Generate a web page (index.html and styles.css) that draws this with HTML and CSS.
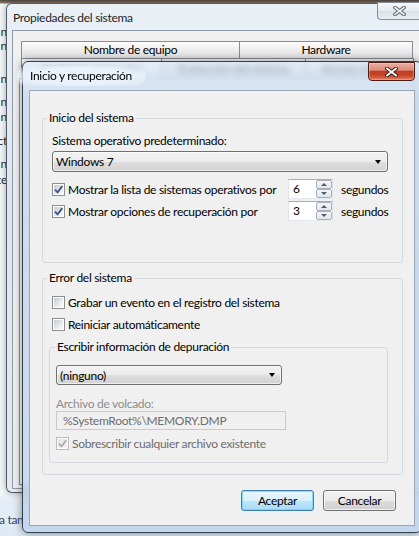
FILE: index.html
```html
<!DOCTYPE html>
<html lang="es">
<head>
<meta charset="utf-8">
<title>Inicio y recuperación</title>
<link rel="stylesheet" href="styles.css">
</head>
<body>
<div class="desktop">
  <div class="bgwin">
    <span class="frag f1">n</span>
    <span class="frag f2">n</span>
    <span class="frag f3">n</span>
    <span class="frag f4">n</span>
    <span class="frag f5">n</span>
    <span class="frag f6">ct</span>
    <span class="frag f7">n</span>
    <span class="frag f8">ce</span>
  </div>
  <div class="bgtext">a tan</div>

  <div class="win outer">
    <div class="titlebar">
      <span class="title">Propiedades del sistema</span>
      <span class="close inactive">
        <svg width="13" height="10" viewBox="0 0 13 10"><path d="M2 1.5 L11 8.5 M11 1.5 L2 8.5" stroke="#5d6873" stroke-width="3.6" stroke-linecap="square"/><path d="M2 1.5 L11 8.5 M11 1.5 L2 8.5" stroke="#f3f5f7" stroke-width="1.6" stroke-linecap="square"/></svg>
      </span>
    </div>
    <div class="client">
      <div class="tabs row1">
        <div class="tab t1">Nombre de equipo</div>
        <div class="tab t2">Hardware</div>
      </div>
      <div class="tabs row2">
        <div class="tab t3 sel">Opciones avanzadas</div>
        <div class="tab t4">Protección del sistema</div>
        <div class="tab t5">Acceso remoto</div>
      </div>
      <div class="tabpage"></div>
    </div>
  </div>

  <div class="win dialog">
    <div class="titlebar">
      <span class="title">Inicio y recuperación</span>
      <span class="close red">
        <svg width="13" height="10" viewBox="0 0 13 10"><path d="M2 1.5 L11 8.5 M11 1.5 L2 8.5" stroke="#3b1a13" stroke-width="3.8" stroke-linecap="square"/><path d="M2 1.5 L11 8.5 M11 1.5 L2 8.5" stroke="#ffffff" stroke-width="1.8" stroke-linecap="square"/></svg>
      </span>
    </div>
    <div class="client">
      <fieldset class="group g1">
        <legend>Inicio del sistema</legend>
        <div class="label first">Sistema operativo predeterminado:</div>
        <div class="combo wide"><span>Windows 7</span><i class="arrow"></i></div>
        <div class="cbrow spinrow r1">
          <span class="check"><span class="cb"><svg viewBox="0 0 11 11"><path d="M2 5.6 L4.6 8.3 L9.3 2.2" fill="none" stroke="#3d5591" stroke-width="1.9"/></svg></span>Mostrar la lista de sistemas operativos por</span>
          <span class="spin"><span class="val">6</span><span class="spinbtns"><span class="sb up"></span><span class="sb down"></span></span></span>
          <span class="unit">segundos</span>
        </div>
        <div class="cbrow spinrow r2">
          <span class="check"><span class="cb"><svg viewBox="0 0 11 11"><path d="M2 5.6 L4.6 8.3 L9.3 2.2" fill="none" stroke="#3d5591" stroke-width="1.9"/></svg></span>Mostrar opciones de recuperación por</span>
          <span class="spin"><span class="val">3</span><span class="spinbtns"><span class="sb up"></span><span class="sb down"></span></span></span>
          <span class="unit">segundos</span>
        </div>
      </fieldset>

      <fieldset class="group g2">
        <legend>Error del sistema</legend>
        <div class="cbrow r3"><span class="check"><span class="cb"></span>Grabar un evento en el registro del sistema</span></div>
        <div class="cbrow r4"><span class="check"><span class="cb"></span>Reiniciar automáticamente</span></div>

        <fieldset class="group g3">
          <legend>Escribir información de depuración</legend>
          <div class="combo narrow"><span>(ninguno)</span><i class="arrow"></i></div>
          <div class="label disabled dumplabel">Archivo de volcado:</div>
          <div class="textfield">%SystemRoot%\MEMORY.DMP</div>
          <div class="cbrow r5 disabled"><span class="check"><span class="cb"><svg viewBox="0 0 11 11"><path d="M2 5.6 L4.6 8.3 L9.3 2.2" fill="none" stroke="#a9a9a9" stroke-width="1.7"/></svg></span>Sobrescribir cualquier archivo existente</span></div>
        </fieldset>
      </fieldset>

      <div class="buttons">
        <button class="btn default">Aceptar</button>
        <button class="btn">Cancelar</button>
      </div>
    </div>
  </div>
</div>
</body>
</html>
```
FILE: styles.css
```css
* { box-sizing: border-box; }
html, body { margin: 0; padding: 0; }
body {
  font-family: Lato, "Noto Sans", sans-serif;
  font-size: 12px;
  letter-spacing: -0.3px;
  color: #000;
  overflow: hidden;
}
.desktop {
  position: relative;
  width: 419px;
  height: 536px;
  overflow: hidden;
  background: linear-gradient(#4e4640 0, #8a7866 3px, #f5f8fb 4px, #f5f8fb 492px, #e4edf7 500px, #dfe9f5 100%);
}

/* background window fragments */
.bgwin {
  position: absolute;
  left: 0;
  top: 0;
  width: 7px;
  height: 493px;
  overflow: hidden;
}
.frag {
  position: absolute;
  right: 0;
  line-height: 11px;
  color: #1d2b3a;
}
.f1 { top: 26px; }
.f2 { top: 40px; }
.f3 { top: 73px; }
.f4 { top: 96px; }
.f5 { top: 111px; }
.f6 { top: 135px; }
.f7 { top: 158px; }
.f8 { top: 174px; }
.bgtext {
  position: absolute;
  left: -1px;
  top: 512px;
  line-height: 16px;
  color: #3a4a5c;
}

/* windows */
.win {
  position: absolute;
  display: flex;
  flex-direction: column;
  border-radius: 6px;
}
.titlebar {
  display: flex;
  align-items: center;
  flex: none;
}
.title { padding-left: 1px; }
.close {
  margin-left: auto;
  align-self: flex-start;
  display: grid;
  place-items: center;
  border-radius: 0 0 4px 4px;
}

.outer {
  left: 6px;
  top: 3px;
  width: 422px;
  height: 490px;
  border: 1px solid rgba(45, 55, 68, 0.8);
  background: linear-gradient(#e9f0f6, #dde6ef 40%, #e3eaf1);
  box-shadow: 0 0 7px rgba(0, 0, 0, 0.35);
  padding: 0 5px 3px 5px;
}
.outer .titlebar { height: 26px; }
.outer .title { color: #1a1f24; }
.close.inactive {
  width: 45px;
  height: 18px;
  margin-top: -2px;
  border: 1px solid rgba(90, 100, 112, 0.7);
  background: linear-gradient(#f7f9fb, #e6ecf2 50%, #d9e1e9 51%, #e8eef4);
}
.outer .client {
  flex: 1;
  display: flex;
  flex-direction: column;
  background: #f0f0f0;
  border: 1px solid #8d99a6;
  padding: 10px 0 3px 6px;
}
.tabs {
  display: flex;
  margin-left: 2px;
}
.tab {
  border: 1px solid #898c95;
  border-bottom: none;
  background: linear-gradient(#fdfdfd, #ececec 55%, #e2e2e2);
  text-align: center;
  white-space: nowrap;
  overflow: hidden;
}
.tab + .tab { margin-left: -1px; }
.row1 .tab { height: 17px; line-height: 16px; }
.row2 .tab { height: 20px; line-height: 19px; }
.t1 { width: 219px; }
.t2 { width: 174px; }
.t3 { width: 141px; }
.t4 { width: 145px; }
.t5 { width: 109px; }
.tab.sel { background: #fff; }
.tabpage {
  flex: 1;
  background: #fff;
  border: 1px solid #898c95;
  margin-right: 8px;
}

.dialog {
  left: 22px;
  top: 61px;
  width: 400px;
  height: 472px;
  border: 1px solid #343f4c;
  background: linear-gradient(rgba(214, 229, 245, 0.68), rgba(193, 213, 236, 0.8) 40px, rgba(190, 211, 235, 0.85));
  backdrop-filter: blur(3px);
  box-shadow: 0 0 10px rgba(0, 0, 0, 0.45);
  padding: 0 6px 6px 6px;
}
.dialog .titlebar { height: 28px; }
.dialog .title {
  padding: 0 14px 0 1px;
  margin-left: -13px;
  padding-left: 14px;
  border-radius: 10px;
  background: radial-gradient(ellipse at center, rgba(235, 243, 251, 0.95) 55%, rgba(225, 236, 248, 0) 100%);
  line-height: 20px;
}
.close.red {
  width: 47px;
  height: 19px;
  margin-top: 0;
  border: 1px solid #4a1d15;
  border-radius: 0 0 4px 4px;
  background: linear-gradient(#eab0a2 0%, #d98a78 42%, #c13d22 50%, #c4462a 72%, #e07e5c 100%);
  box-shadow: inset 0 0 0 1px rgba(255, 220, 210, 0.35);
}
.dialog > .client {
  flex: 1;
  display: flex;
  flex-direction: column;
  background: #f0f0f0;
  border: 1px solid #9aa6b3;
  padding: 0 11px 0 12px;
}

/* group boxes */
.group {
  margin: 0;
  border: 1px solid #d3d9de;
  border-radius: 3px;
  padding: 0 14px 0 9px;
  min-width: 0;
}
.group legend {
  padding: 0 2px;
  margin-left: -5px;
  line-height: 16px;
}
.g1 { margin-top: 19px; padding-bottom: 41px; }
.g2 { margin-top: 7px; padding-bottom: 11px; }
.g3 {
  margin: 5px 0 0 -3px;
  padding: 0 0 9px 6px;
}
.g3 legend { margin-left: -1px; }

.label { line-height: 16px; }
.label.first { margin-top: 7px; }
.disabled { color: #8d8d8d; }
.dumplabel { margin-top: 12px; line-height: 14px; }

.combo {
  display: flex;
  align-items: center;
  height: 21px;
  border: 1px solid #707070;
  border-radius: 3px;
  background: linear-gradient(#f3f3f3 0%, #ebebeb 50%, #dedede 51%, #d2d2d2 100%);
  box-shadow: inset 0 0 0 1px rgba(255, 255, 255, 0.6);
  padding-left: 3px;
}
.combo.wide { margin-top: 2px; }
.combo.narrow { margin-top: 10px; width: 226px; height: 20px; }
.arrow {
  margin-left: auto;
  margin-right: 6px;
  width: 0;
  height: 0;
  border-left: 3.5px solid transparent;
  border-right: 3.5px solid transparent;
  border-top: 4px solid #000;
}

.cbrow {
  display: flex;
  align-items: center;
  height: 20px;
}
.spinrow {
  display: grid;
  grid-template-columns: 236px 45px auto;
}
.r1 { margin-top: 7px; }
.r2 { margin-top: 2px; }
.r3 { margin-top: 6px; }
.r4 { margin-top: 2px; }
.r5 { margin-top: 3px; color: #6d6d6d; }
.check {
  display: flex;
  align-items: center;
  white-space: nowrap;
}
.cb {
  flex: none;
  width: 13px;
  height: 13px;
  margin-right: 3px;
  border: 1px solid #8e8f8f;
  padding: 1px;
  background: linear-gradient(135deg, #c6cacf, #eef0f2 70%, #f6f6f6) content-box, #fdfdfd;
  display: grid;
  place-items: center;
}
.cb svg { width: 11px; height: 11px; margin: -1px; }
.r5 .cb {
  border-color: #bcbcbc;
  background: linear-gradient(135deg, #e2e2e2, #f4f4f4) content-box, #fdfdfd;
}

.spin {
  display: flex;
  height: 20px;
  border: 1px solid;
  border-color: #abadb3 #dbdfe6 #e3e9ef #e2e3ea;
  background: #fff;
}
.val {
  flex: 1;
  padding-left: 4px;
  line-height: 18px;
}
.spinbtns {
  width: 16px;
  display: flex;
  flex-direction: column;
}
.sb {
  flex: 1;
  display: grid;
  place-items: center;
  border: 1px solid #a7b0bb;
  border-radius: 2px;
  background: linear-gradient(#f5f6f8, #e2e6eb);
}
.sb::after {
  content: "";
  width: 0;
  height: 0;
  border-left: 3px solid transparent;
  border-right: 3px solid transparent;
}
.up::after { border-bottom: 3px solid #4c5e78; }
.down::after { border-top: 3px solid #4c5e78; }
.unit { padding-left: 8px; }

.textfield {
  width: 230px;
  height: 19px;
  border: 1px solid #c9cacc;
  background: #f0f0f0;
  color: #6d6d6d;
  padding-left: 6px;
  line-height: 17px;
}

.buttons {
  display: flex;
  justify-content: flex-end;
  gap: 9px;
  margin-top: 15px;
  margin-right: 7px;
}
.btn {
  width: 73px;
  height: 21px;
  padding: 0;
  font: inherit;
  letter-spacing: inherit;
  color: #000;
  border: 1px solid #707070;
  border-radius: 3px;
  background: linear-gradient(#f2f2f2 0%, #ebebeb 50%, #dddddd 51%, #d0d0d0 100%);
  box-shadow: inset 0 0 0 1px rgba(255, 255, 255, 0.7);
}
.btn.default {
  border-color: #3c7fb1;
  background: linear-gradient(#eaf6fd 0%, #d9f0fc 50%, #bee6fd 51%, #a9dbf6 100%);
  box-shadow: inset 0 0 0 1px rgba(96, 215, 252, 0.7);
}
```
